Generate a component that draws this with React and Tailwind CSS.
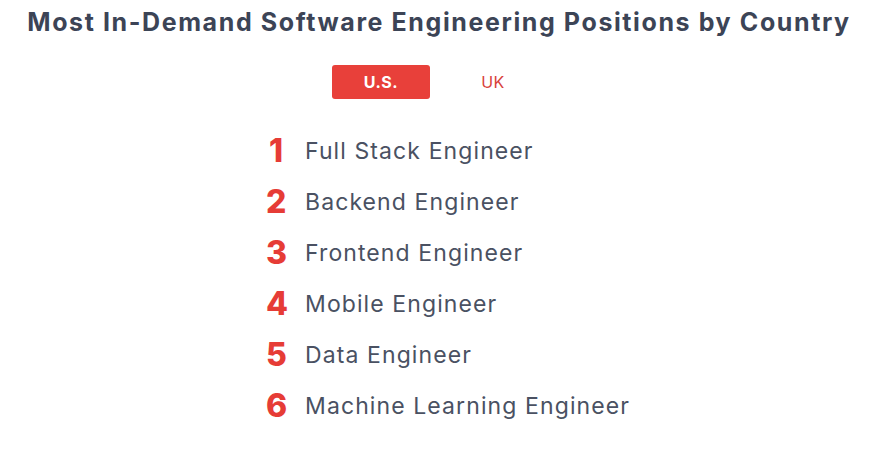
import { useState } from 'react';

const positions = {
  us: [
    'Full Stack Engineer',
    'Backend Engineer',
    'Frontend Engineer',
    'Mobile Engineer',
    'Data Engineer',
    'Machine Learning Engineer',
  ],
  uk: [
    'Full Stack Engineer',
    'Backend Engineer',
    'Frontend Engineer',
    'Data Engineer',
    'Mobile Engineer',
    'Machine Learning Engineer',
  ],
};

export default function App() {
  const [country, setCountry] = useState('us');

  return (
    <div
      className="w-[878px] h-[456px] bg-white flex flex-col items-center"
      style={{ fontFamily: 'Inter, "Open Sans", sans-serif' }}
    >
      {/* Title */}
      <h1 className="mt-[6px] text-[25px] leading-[32px] font-bold text-[#3c4456] tracking-[1.6px]">
        Most In-Demand Software Engineering Positions by Country
      </h1>

      {/* Tabs */}
      <div className="mt-[27px] flex items-center gap-[14px] pr-[4px]">
        <button
          onClick={() => setCountry('us')}
          className={`w-[98px] h-[34px] rounded-[3px] text-[16px] tracking-[0.5px] font-bold ${
            country === 'us' ? 'bg-[#e8403a] text-white' : 'text-[#d8403a] font-normal'
          }`}
        >
          U.S.
        </button>
        <button
          onClick={() => setCountry('uk')}
          className={`w-[98px] h-[34px] rounded-[3px] text-[16px] tracking-[0.5px] ${
            country === 'uk' ? 'bg-[#e8403a] text-white font-bold' : 'text-[#d8403a]'
          }`}
        >
          UK
        </button>
      </div>

      {/* List */}
      <ol className="mt-[34px] self-start ml-[266px] flex flex-col gap-[15px]">
        {positions[country].map((name, i) => (
          <li key={name} className="flex items-center h-[36px]">
            <span className="w-[20px] mr-[19px] text-center text-[32px] leading-[36px] font-extrabold text-[#e63c36]">
              {i + 1}
            </span>
            <span className="text-[23px] leading-[36px] text-[#4a5162] tracking-[1.1px]">
              {name}
            </span>
          </li>
        ))}
      </ol>
    </div>
  );
}
